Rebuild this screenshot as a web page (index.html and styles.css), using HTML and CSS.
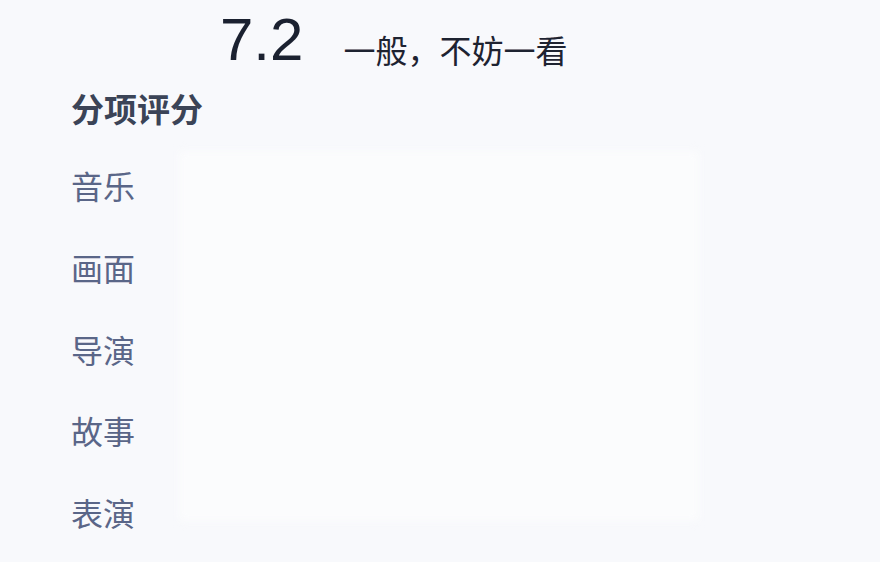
FILE: index.html
```html
<!DOCTYPE html>
<html lang="zh-CN">
<head>
    <meta charset="UTF-8">
    <meta name="viewport" content="width=device-width, initial-scale=1.0">
    <title>评分</title>
    <link rel="stylesheet" href="styles.css">
</head>
<body>
    <div class="rating-card">
        <div class="score-row">
            <span class="score">7.2</span>
            <span class="verdict">一般，不妨一看</span>
        </div>
        <h2 class="section-title">分项评分</h2>
        <div class="breakdown">
            <ul class="item-list">
                <li>音乐</li>
                <li>画面</li>
                <li>导演</li>
                <li>故事</li>
                <li>表演</li>
            </ul>
            <div class="chart-area"></div> <!-- 图表区域 -->
        </div>
    </div>
</body>
</html>
```

FILE: styles.css
```css
body {
    margin: 0;
    background-color: #f8f9fc;
    font-family: "Noto Sans CJK SC", "Liberation Sans", sans-serif;
}
.rating-card {
    padding: 0 0 0 71px;
    height: 562px;
    box-sizing: border-box;
    overflow: hidden;
}
.score-row {
    display: flex;
    align-items: baseline;
    gap: 40px;
    padding-left: 149px;
    height: 80px;
}
.score {
    font-family: "Liberation Sans", sans-serif;
    font-size: 60px;
    line-height: 80px;
    color: #1b2130;
}
.verdict {
    font-size: 32px;
    color: #1e2331;
    position: relative;
    top: 3px; /* 文字略低于分数基线 */
}
.section-title {
    margin: 0;
    font-size: 33px;
    line-height: 56px;
    font-weight: bold;
    color: #3b4457;
}
.breakdown {
    display: grid;
    grid-template-columns: 108px 520px;
    padding-top: 9px;
}
.item-list {
    list-style: none;
    margin: 0;
    padding: 0;
}
.item-list li {
    font-size: 32px;
    line-height: 81.8px;
    color: #5a6688;
}
.chart-area {
    margin-top: 6px;
    height: 370px;
    background-color: #fbfcfd;
    filter: blur(4px);
}
```
